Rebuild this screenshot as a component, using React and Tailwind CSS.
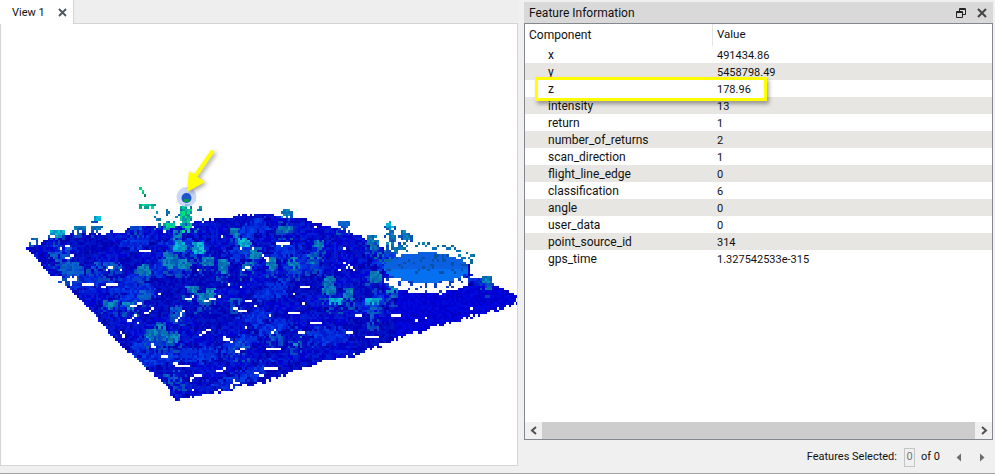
import React from "react";

const rows = [
  ["x", "491434.86"],
  ["y", "5458798.49"],
  ["z", "178.96"],
  ["intensity", "13"],
  ["return", "1"],
  ["number_of_returns", "2"],
  ["scan_direction", "1"],
  ["flight_line_edge", "0"],
  ["classification", "6"],
  ["angle", "0"],
  ["user_data", "0"],
  ["point_source_id", "314"],
  ["gps_time", "1.327542533e-315"],
];

// outline of the point cloud, in page pixels
const outline = [
  [25, 247], [43, 240], [70, 233], [120, 232], [140, 225], [173, 225], [217, 217], [260, 213],
  [303, 218], [333, 227], [363, 237], [383, 248], [400, 251], [440, 252], [468, 262], [470, 277], [482, 278], [516, 295],
  [516, 303], [440, 325], [403, 335], [360, 352], [320, 362], [260, 382], [173, 400], [167, 387],
  [113, 338], [93, 313], [65, 285], [77, 277], [50, 275],
];

const TEAL = ["#0a78b8", "#0a88bc", "#0668b4", "#0c94c0", "#0558c0", "#0a70a8"];
const CYAN = ["#00b8dc", "#06a0cc", "#0b88c4", "#10c4d4", "#0a90c0"];
const GREEN = ["#00d890", "#08c0a0", "#05a090", "#00e080"];
const MID = ["#0a50d8", "#0560c8", "#0a68c8", "#0440d0"];

// lighter blobs (rooftops): centre x, centre y, half width, half height, colours, density
const clusters = [
  [185, 216, 7, 15, GREEN, 0.9], [146, 204, 9, 3, GREEN, 1], [167, 225, 7, 4, GREEN, 0.95],
  [57, 232, 8, 4, CYAN, 0.95], [80, 227, 7, 3, TEAL, 1], [95, 217, 5, 3, CYAN, 0.95], [95, 225, 6, 3, TEAL, 0.95],
  [32, 236, 4, 2, TEAL, 1], [135, 225, 7, 3, MID, 0.95], [176, 236, 6, 8, TEAL, 0.6],
  [168, 258, 8, 10, TEAL, 0.9], [178, 247, 8, 6, CYAN, 0.95], [197, 247, 8, 7, CYAN, 0.9],
  [182, 263, 8, 6, TEAL, 0.95], [205, 261, 7, 6, TEAL, 0.9], [222, 265, 7, 8, TEAL, 0.9],
  [233, 230, 6, 5, TEAL, 0.75], [242, 240, 8, 6, CYAN, 0.85], [253, 252, 7, 7, TEAL, 0.85], [247, 265, 7, 7, TEAL, 0.8],
  [190, 288, 8, 6, TEAL, 0.95], [203, 297, 8, 7, TEAL, 0.9], [210, 290, 6, 5, TEAL, 0.8],
  [143, 268, 8, 7, TEAL, 0.9], [143, 293, 8, 5, MID, 0.9], [130, 305, 9, 4, TEAL, 0.85], [108, 303, 8, 5, TEAL, 0.8],
  [70, 268, 13, 8, MID, 0.95], [105, 265, 18, 6, MID, 0.6], [60, 252, 12, 9, MID, 0.6],
  [152, 333, 9, 7, TEAL, 0.9], [170, 335, 11, 7, TEAL, 0.8], [177, 310, 8, 7, MID, 0.7], [160, 325, 6, 6, TEAL, 0.6],
  [285, 212, 7, 6, TEAL, 0.85], [285, 228, 8, 4, TEAL, 0.95], [270, 263, 7, 8, TEAL, 0.8], [292, 262, 7, 8, TEAL, 0.85],
  [317, 242, 6, 5, TEAL, 0.85], [312, 260, 7, 7, TEAL, 0.6], [328, 277, 7, 4, TEAL, 0.95], [327, 287, 8, 7, TEAL, 0.9],
  [335, 300, 8, 6, CYAN, 0.85], [347, 292, 6, 7, TEAL, 0.7], [372, 275, 8, 7, TEAL, 0.9], [372, 300, 9, 6, CYAN, 0.9],
  [372, 312, 6, 11, MID, 0.55], [372, 240, 7, 8, TEAL, 0.8], [390, 223, 5, 5, CYAN, 0.6], [390, 238, 5, 10, TEAL, 0.65],
  [405, 233, 6, 6, TEAL, 0.7], [392, 288, 7, 8, TEAL, 0.5], [487, 278, 6, 4, TEAL, 0.85], [487, 285, 4, 5, TEAL, 0.55],
  [343, 223, 7, 4, MID, 0.95], [318, 250, 5, 3, MID, 0.7], [235, 300, 7, 6, MID, 0.5], [175, 375, 11, 7, MID, 0.4],
  [240, 345, 9, 7, MID, 0.5], [275, 335, 8, 6, MID, 0.6], [295, 340, 7, 6, TEAL, 0.3],
];

// white gaps: start x, start y, run x, run y
const gaps = [
  [65, 257, 8, -3], [105, 268, 5, -1], [82, 283, 8, -1], [100, 285, 14, -3], [138, 250, 10, 0],
  [130, 305, 10, -3], [145, 313, 6, -6], [175, 318, 8, -8], [128, 320, 6, -5], [200, 333, 9, -5],
  [232, 308, 13, 1], [245, 300, 5, 0], [222, 337, 9, 3], [150, 344, 4, 2], [145, 368, 5, 5],
  [178, 365, 10, -1], [230, 383, 8, -1], [185, 298, 6, -2], [275, 243, 12, 0], [262, 255, 5, 3],
  [242, 268, 6, -2], [300, 286, 8, 0], [310, 322, 9, 0], [356, 314, 5, 0], [288, 312, 10, 1],
  [365, 336, 12, 0], [392, 315, 7, 0], [267, 347, 12, 1], [265, 368, 10, -2], [215, 370, 7, -2],
  [235, 350, 8, -2], [205, 300, 8, -3], [348, 265, 4, 3], [345, 330, 6, 2], [255, 372, 6, 2],
  [172, 362, 6, 3], [190, 376, 9, -1], [120, 332, 3, 3], [160, 355, 5, -1], [298, 330, 4, 0],
];

function inside(x, y, poly) {
  let hit = false;
  for (let i = 0, j = poly.length - 1; i < poly.length; j = i++) {
    const [xi, yi] = poly[i];
    const [xj, yj] = poly[j];
    if (yi > y !== yj > y && x < ((xj - xi) * (y - yi)) / (yj - yi) + xi) hit = !hit;
  }
  return hit;
}

function makeCloud() {
  let seed = 4721;
  const rnd = () => {
    seed = (seed * 1664525 + 1013904223) % 4294967296;
    return seed / 4294967296;
  };
  const pick = (list) => list[Math.floor(rnd() * list.length)];
  const step = 2.4;
  const key = (x, y) => `${Math.round(x / step)}:${Math.round(y / step)}`;
  const grid = new Map();
  const put = (x, y, c) => grid.set(key(x, y), c);

  // city blocks: each one gets its own shade
  const blockTone = {};
  const toneOf = (id) => {
    if (blockTone[id] === undefined) blockTone[id] = rnd();
    return blockTone[id];
  };

  for (let y = 190; y < 402; y += step) {
    for (let x = 24; x < 518; x += step) {
      const wob = (rnd() - 0.5) * 3;
      if (!inside(x + wob, y + wob, outline)) continue;
      const sx = (x - 425) / 43;
      const sy = (y - 267) / 15;
      const inDisc = sx * sx + sy * sy < 1;
      const cx = (x - 425) / 42;
      const cy = (y - 281) / 11;
      if (!inDisc && cx * cx + cy * cy < 1) {
        if (rnd() < 0.16) put(x, y, "#0a3cc8");
        continue;
      }
      if (!inDisc && y < 262 && x > 395) continue;
      if (inDisc) {
        const speck = rnd();
        put(x, y, speck < 0.14 && y < 272 ? "#0a4fa8" : y < 268 ? "#0a60e0" : "#0570f0");
        continue;
      }
      if (rnd() < 0.006) continue;
      // skew into the slab's own axes, streets run along them (edges roughened)
      const s = (x - 25) * 0.75 - (y - 247) * 0.75 + (rnd() - 0.5) * 9 + Math.sin(y * 0.09) * 7;
      const t = (x - 25) * 0.27 + (y - 247) * 0.95 + (rnd() - 0.5) * 6 + Math.sin(x * 0.05) * 5;
      const si = Math.floor(s / 34);
      const ti = Math.floor(t / 17);
      const onStreet = s / 34 - si < 0.08 || t / 17 - ti < 0.14;
      const tone = toneOf(`${si}:${ti}`);
      let color;
      if (x > 395 && y > 285) color = pick(["#0000d8", "#0008e0", "#0000c8"]);
      else if (onStreet) color = pick(["#0000a8", "#0000b8", "#0008b0", "#0010c0"]);
      else if (tone > 0.72) color = pick(["#0030e0", "#0040e8", "#0020d8", "#0030d8", "#0018d0"]);
      else if (tone < 0.22) color = pick(["#0000b8", "#0008c0", "#0010c8", "#0018c8"]);
      else color = pick(["#0000c8", "#0010d0", "#0020d8", "#0018c8", "#0000d8"]);
      put(x, y, color);
    }
  }

  clusters.forEach(([cx, cy, hw, hh, colors, density]) => {
    for (let py = cy - hh; py < cy + hh + 8; py += step) {
      for (let px = cx - hw; px < cx + hw; px += step) {
        const d = ((px - cx) / hw) ** 2 + ((py - cy) / hh) ** 2;
        if (d < 1 && rnd() < density * (1.25 - d * 0.6)) put(px, py, pick(colors));
        else if (py > cy && colors !== GREEN && rnd() < 0.35) put(px, py, pick(["#0448c0", "#0558b8", "#0a40c8"]));
      }
    }
  });

  gaps.forEach(([x, y, dx, dy]) => {
    const n = Math.ceil(Math.max(Math.abs(dx), Math.abs(dy)) / step);
    for (let i = 0; i <= n; i++) grid.delete(key(x + (dx * i) / n, y + (dy * i) / n));
  });

  // loose points along the stadium's far rim
  for (let i = 0; i < 60; i++) {
    const a = Math.PI + rnd() * Math.PI;
    const r = rnd() * 0.35 + 0.85;
    put(425 + Math.cos(a) * 44 * r, 262 + Math.sin(a) * 17 * r, pick(["#0a6898", "#0a80b0", "#0570c0"]));
  }
  // and the scattered ones round the tall tower
  for (let i = 0; i < 36; i++) put(150 + rnd() * 52, 206 + rnd() * 24, pick([...TEAL, "#0a6898"]));
  put(140, 188, "#00d880");
  put(142, 190.4, "#00d880");
  put(142, 192.8, "#00c070");
  put(144.5, 195, "#058060");

  const cells = {};
  grid.forEach((color, k) => {
    const [gx, gy] = k.split(":").map(Number);
    (cells[color] = cells[color] || []).push(`M${(gx * step).toFixed(1)} ${(gy * step).toFixed(1)}h2.4v2.4h-2.4z`);
  });
  return cells;
}

const cloud = makeCloud();

function PointCloud() {
  return (
    <svg width="516" height="441" viewBox="1 24 516 441" className="block">
      <g shapeRendering="crispEdges">
        {Object.entries(cloud).map(([color, parts]) => (
          <path key={color} d={parts.join("")} fill={color} />
        ))}
      </g>
      {/* picked point and the callout arrow */}
      <circle cx="186.5" cy="197" r="10" fill="#b9caf2" opacity="0.75" />
      <circle cx="186.5" cy="198" r="5" fill="#1f55c8" />
      <rect x="184" y="199" width="5" height="3" fill="#059a50" />
      <g style={{ filter: "drop-shadow(2px 2px 2px rgba(0,0,0,0.35))" }}>
        <path d="M212 152 L196 175" stroke="#ffff00" strokeWidth="4" strokeLinecap="round" />
        <path d="M187 192 L189 171 L205 182 Z" fill="#ffff00" />
      </g>
    </svg>
  );
}

function App() {
  return (
    <div
      className="relative flex h-[474px] w-[995px] flex-col overflow-hidden bg-[#f0f0f0] text-[12px] text-[#111]"
      style={{ fontFamily: "Roboto, sans-serif" }}
    >
      <div className="flex min-h-0 flex-1">
        {/* map view */}
        <div className="flex h-[466px] w-[518px] flex-col">
          <div className="flex h-6 border-b border-[#d4d4d4] bg-[#eeeeee]">
            <div className="-mb-px flex h-6 w-[74px] items-center border-r border-[#d4d4d4] bg-white pl-3">
              <span className="text-[11px] leading-none">View 1</span>
              <svg width="9" height="9" viewBox="0 0 9 9" className="ml-[13px]">
                <path d="M1 1 L8 8 M8 1 L1 8" stroke="#4a5560" strokeWidth="1.8" />
              </svg>
            </div>
          </div>
          <div className="flex-1 border-x border-b border-[#d4d4d4] bg-white">
            <PointCloud />
          </div>
        </div>

        {/* feature information dock */}
        <div className="ml-[6px] flex h-[440px] w-[469px] flex-col pt-[2px]">
          <div className="flex h-[21px] shrink-0 items-center justify-between bg-[#d9d9d9] pl-[5px] pr-[6px]">
            <span>Feature Information</span>
            <div className="flex items-center gap-[11px]">
              <svg width="10" height="10" viewBox="0 0 10 10">
                <path d="M3.5 3 V0.5 H9.5 V6.5 H7 M3.5 1.5 H9.5 M0.5 3.5 H6.5 V9.5 H0.5 Z M0.5 4.5 H6.5" fill="none" stroke="#222" />
              </svg>
              <svg width="10" height="10" viewBox="0 0 10 10">
                <path d="M1 1 L9 9 M9 1 L1 9" stroke="#444" strokeWidth="2" />
              </svg>
            </div>
          </div>
          <div className="flex min-h-0 flex-1 flex-col border border-[#828790] bg-white">
            <div className="flex h-[22px] shrink-0">
              <div className="flex w-[188px] items-center border-r border-[#e5e5e5] pl-[4px]">Component</div>
              <div className="flex items-center pl-[4px] text-[11.5px]">Value</div>
            </div>
            <div className="min-h-0 flex-1">
              {rows.map(([name, value], i) => (
                <div key={name} className={`relative flex h-[17px] items-baseline pt-px leading-[16px] ${i % 2 === 1 ? "bg-[#e8e6e2]" : "bg-white"} ${name === "z" ? "z-10" : ""}`}>
                  {/* yellow callout round the z row, hides the edges of its neighbours */}
                  {name === "z" && (
                    <div className="absolute left-[10px] top-[-3px] h-6 w-[232px] border-[3px] border-[#ffff00] bg-white shadow-[2px_3px_4px_rgba(0,0,0,0.35)]" />
                  )}
                  <div className="relative w-[188px] pl-[23px]">{name}</div>
                  <div className="relative pl-[4px] text-[11px]">{value}</div>
                </div>
              ))}
            </div>
            <div className="flex h-[17px] shrink-0 items-center bg-[#f0f0f0]">
              <div className="flex h-full w-[17px] items-center justify-center">
                <svg width="8" height="9" viewBox="0 0 8 9">
                  <path d="M6 1 L2 4.5 L6 8" fill="none" stroke="#505050" strokeWidth="2" />
                </svg>
              </div>
              <div className="h-full flex-1 bg-[#cdcdcd]" />
              <div className="flex h-full w-[17px] items-center justify-center">
                <svg width="8" height="9" viewBox="0 0 8 9">
                  <path d="M2 1 L6 4.5 L2 8" fill="none" stroke="#505050" strokeWidth="2" />
                </svg>
              </div>
            </div>
          </div>
        </div>
      </div>

      {/* status bar */}
      <div className="flex h-[33px] shrink-0 items-center justify-end border-b border-[#a0a0a0] pr-[10px] text-[11px]">
        <span>Features Selected:</span>
        <span className="ml-[7px] flex h-[19px] w-[11px] items-center justify-center border border-[#c4c4c4] text-[#777]">0</span>
        <span className="ml-[6px]">of 0</span>
        <svg width="6" height="9" viewBox="0 0 6 9" className="ml-[16px]">
          <path d="M5 0.5 V8.5 L0.5 4.5 Z" fill="#6d6d6d" />
        </svg>
        <svg width="6" height="9" viewBox="0 0 6 9" className="ml-[17px]">
          <path d="M1 0.5 V8.5 L5.5 4.5 Z" fill="#6d6d6d" />
        </svg>
      </div>
    </div>
  );
}

export default App;
